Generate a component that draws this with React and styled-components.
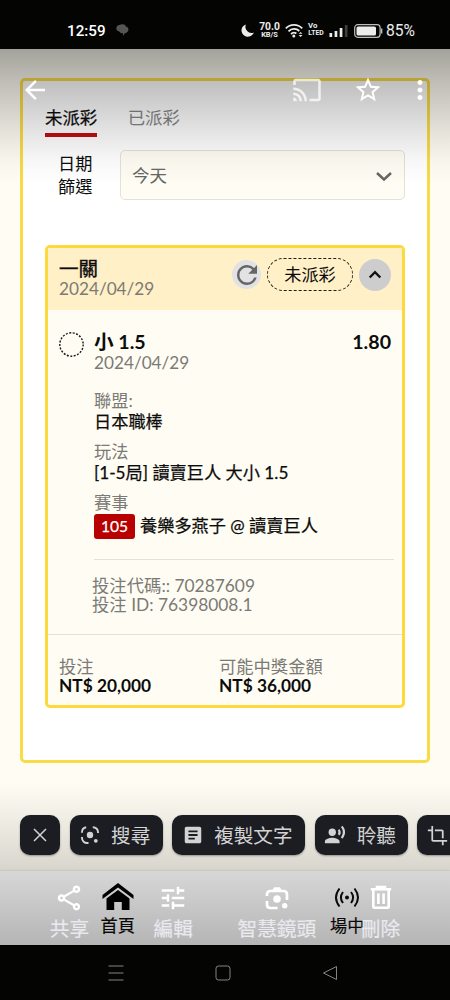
import React from 'react'
import styled, { createGlobalStyle } from 'styled-components'
import {
  MdArrowBack,
  MdCast,
  MdStarBorder,
  MdMoreVert,
  MdOutlineShare,
  MdTune,
  MdArticle,
  MdRecordVoiceOver,
  MdCrop,
  MdRefresh
} from 'react-icons/md'

const GlobalStyle = createGlobalStyle`
  * {
    box-sizing: border-box;
  }
  body {
    margin: 0;
    background: #040503;
  }
  svg {
    display: block;
    flex-shrink: 0;
  }
`

const Screen = styled.div`
  width: 450px;
  height: 1000px;
  overflow: hidden;
  display: flex;
  flex-direction: column;
  background: #040503;
  font-family: Lato, 'Noto Sans CJK TC', sans-serif;
  font-size: 17.2px;
  line-height: 20px;
  color: #0c0c0c;
  white-space: nowrap;
`

/* status bar */
const StatusBar = styled.div`
  height: 49px;
  flex-shrink: 0;
  display: flex;
  align-items: center;
  padding: 12px 0 0 67px;
  color: #ececec;
  font-family: Roboto, sans-serif;
`
const Clock = styled.span`
  width: 49px;
  font-size: 15.2px;
  font-weight: 500;
  color: #fff;
`
const StatusIcons = styled.div`
  display: flex;
  align-items: center;
  width: 209px;
  margin-left: auto;
`
const Stacked = styled.div`
  display: flex;
  flex-direction: column;
  align-items: center;
  width: ${p => p.$width}px;
  margin: 0 5px;
  font-weight: 700;
  font-size: ${p => p.$size}px;
  line-height: 7.5px;
  > span:first-child {
    font-size: ${p => p.$top}px;
    line-height: ${p => p.$top - 1}px;
  }
`
const VoLabel = styled.span`
  align-self: flex-start;
`
const BatteryIcon = styled.svg`
  margin: 0 3px 0 6px;
`
const Battery = styled.span`
  font-size: 15.6px;
`

/* photographed page */
const Photo = styled.div`
  position: relative;
  height: 896px;
  flex-shrink: 0;
  display: flex;
  flex-direction: column;
  padding-top: 29px;
  background: #fffdf3;
`
const Panel = styled.div`
  height: 685px;
  margin: 0 20px;
  padding: 23px 22px 0;
  background: #fff;
  border: 3px solid #f9db45;
  border-radius: 5px;
`
const Tabs = styled.div`
  display: flex;
  gap: 30.5px;
`
const Tab = styled.div`
  height: 33px;
  padding-top: 4px;
  border-bottom: 4px solid ${p => (p.$active ? '#c00d12' : 'transparent')};
  color: ${p => (p.$active ? '#0c0c0c' : '#858585')};
  -webkit-text-stroke: ${p => (p.$active ? '0.25px' : '0')};
  font-size: 17.4px;
`
const Filter = styled.div`
  display: flex;
  align-items: center;
  margin-top: 13px;
  height: 49px;
`
const FilterLabel = styled.div`
  width: 75px;
  padding-left: 13px;
  line-height: 23px;
`
const Select = styled.div`
  flex: 1;
  height: 50px;
  display: flex;
  align-items: center;
  justify-content: space-between;
  padding: 2px 11px 0 11px;
  background: #fffdf3;
  border: 1.5px solid #e4e1d7;
  border-radius: 5px;
  color: #666;
  font-size: 17.5px;
`

/* bet slip */
const Slip = styled.div`
  height: 463px;
  margin-top: 46px;
  background: #fffdf3;
  border: 3px solid #fdd93c;
  border-radius: 5px;
`
const SlipHeader = styled.div`
  height: 62px;
  display: flex;
  align-items: center;
  padding: 0 11px 9px;
  background: #fff0c8;
`
const HeaderText = styled.div`
  flex: 1;
  padding-top: 7px;
`
const Title = styled.div`
  font-size: 19.5px;
  line-height: 21px;
  -webkit-text-stroke: 0.4px;
`
const Muted = styled.div`
  color: #7b7a76;
  height: ${p => p.$height || 20}px;
  line-height: ${p => p.$height || 20}px;
`
const Round = styled.div`
  width: ${p => p.$size}px;
  height: ${p => p.$size}px;
  border-radius: 50%;
  display: flex;
  align-items: center;
  justify-content: center;
  background: ${p => p.$bg};
  color: ${p => p.$color};
`
const Status = styled.div`
  width: 86px;
  height: 33px;
  margin: 0 6px 0 6px;
  display: flex;
  align-items: center;
  justify-content: center;
  border: 1.5px dashed #1d1b14;
  border-radius: 17px;
`
const Selection = styled.div`
  display: flex;
  padding: 21px 11px 0;
  height: 81px;
`
const DottedRing = styled.svg`
  margin: 1px 10px 0 0;
`
const SelectionText = styled.div`
  flex: 1;
`
const Strong = styled.div`
  font-size: 19.6px;
  line-height: 21px;
  height: 22px;
  font-weight: 700;
`
const Details = styled.div`
  margin: 0 8px 0 46px;
  height: 169px;
  border-bottom: 1.5px solid #e4e1d9;
`
const Pair = styled.div`
  height: 51px;
`
const Value = styled.div`
  display: flex;
  align-items: center;
  height: ${p => p.$height || 21}px;
  -webkit-text-stroke: 0.25px;
`
const Badge = styled.span`
  width: 41px;
  height: 25px;
  margin-right: 5px;
  display: flex;
  align-items: center;
  justify-content: center;
  background: #b80000;
  border-radius: 3px;
  color: #fff;
  font-size: 15.6px;
`
const Codes = styled.div`
  height: 75px;
  padding: 16px 0 0 44px;
  border-bottom: 1.5px solid #e4e1d9;
  font-size: 17.35px;
`
const Totals = styled.div`
  display: grid;
  grid-template-columns: 160px 1fr;
  padding: 22px 11px 0;
  font-size: 17.3px;
`
const Amount = styled.div`
  font-weight: 700;
  height: 19px;
  line-height: 19px;
`

/* the site's own bottom navigation */
const SiteNav = styled.div`
  height: 74px;
  margin-top: auto;
  display: flex;
  padding-left: 3px;
  background: #fff;
  box-shadow: 0 0 2px rgba(0, 0, 0, 0.2);
`
const SiteTab = styled.div`
  width: 229.5px;
  flex-shrink: 0;
  display: flex;
  flex-direction: column;
  align-items: center;
  padding-top: 11px;
  -webkit-text-stroke: 0.2px;
  > svg {
    height: 30px;
    margin-bottom: 4px;
  }
`

/* gallery controls on top of the photo */
const TopShade = styled.div`
  position: absolute;
  inset: 0 0 auto;
  height: 136px;
  display: flex;
  align-items: flex-start;
  padding: 25.5px 15px 0 20px;
  color: #fff;
  background: linear-gradient(
    rgba(0, 0, 0, 0.36),
    rgba(0, 0, 0, 0.25) 24%,
    rgba(0, 0, 0, 0.11) 60%,
    rgba(0, 0, 0, 0.03) 82%,
    transparent
  );
`
const TopActions = styled.div`
  display: flex;
  margin-left: auto;
  > svg:first-child {
    margin-right: 31px;
    opacity: 0.75;
  }
  > svg:last-child {
    margin-left: 22.5px;
  }
`
const BottomShade = styled.div`
  position: absolute;
  inset: auto 0 0;
  height: 162px;
  padding-top: 32px;
  overflow: hidden;
  background: linear-gradient(transparent, rgba(0, 0, 0, 0.29));
`
const Chips = styled.div`
  display: flex;
  gap: 9.6px;
  padding-left: 20px;
`
const Chip = styled.div`
  height: 40px;
  width: ${p => p.$width}px;
  flex-shrink: 0;
  display: flex;
  align-items: center;
  gap: ${p => p.$gap || 11}px;
  padding-left: ${p => p.$pad || 11}px;
  background: #1b1d22;
  border-radius: 10px;
  box-shadow: 0 1px 2px rgba(0, 0, 0, 0.35);
  color: #d3d3d3;
  font-size: 19.6px;
  > span {
    padding-top: 2px;
  }
`
const Actions = styled.div`
  display: grid;
  grid-template-columns: repeat(4, 1fr);
  margin-top: 27.5px;
  padding: 0 17.6px;
`
const Action = styled.div`
  display: flex;
  flex-direction: column;
  align-items: center;
  color: #fff;
  font-size: 19.7px;
  > span {
    margin-top: 6px;
    color: #e9e9ee;
    -webkit-text-stroke: 0.2px;
  }
`

const SystemNav = styled.div`
  flex: 1;
  display: flex;
  align-items: center;
  justify-content: space-between;
  padding: 0 112px 0 108px;
  color: #85867f;
`

const Line = ({ size = 24, box = '0 0 24 24', width = 2, children }) => (
  <svg
    width={size}
    height={size}
    viewBox={box}
    fill="none"
    stroke="currentColor"
    strokeWidth={width}
  >
    {children}
  </svg>
)

const StatusRow = () => (
  <StatusBar>
    <Clock>12:59</Clock>
    <svg width="13" height="13" viewBox="0 0 13 13" fill="#555">
      <path d="M5 0.5C8 0 9.5 1 9.8 2.6C12 3 12.8 4.6 12.3 6.5C11.9 8 10.5 9 8.8 9.2L7 12V9.2C5 9.2 3.8 8.5 3.3 7.4C1.2 7.2 0.2 5.5 0.3 4C0.5 2 2.3 0.8 5 0.5Z" />
    </svg>
    <StatusIcons>
      <svg width="13" height="13" viewBox="0 0 13 13" fill="currentColor">
        <path d="M5 0.4A6.3 6.3 0 1 0 12.8 8.4A6 6 0 0 1 5 0.4Z" />
      </svg>
      <Stacked $width={21} $size={7.4} $top={10.3}>
        <span>70.0</span>
        <span>KB/S</span>
      </Stacked>
      <svg
        width="18"
        height="15"
        viewBox="0 0 18 15"
        fill="none"
        stroke="currentColor"
        strokeWidth="1.8"
      >
        <path d="M0.8 5.3C5.3 0.6 12.7 0.6 17.2 5.3M3.5 8.3C6.6 5.2 11.4 5.2 14.3 8" />
        <path d="M6 11C7.7 9.4 9.8 9.4 11.4 10.5" />
        <circle cx="8.8" cy="13" r="1.5" fill="currentColor" stroke="none" />
        <path
          d="M13.7 10.8L15.6 8.9L17.5 10.8ZM13.7 12L15.6 13.9L17.5 12Z"
          fill="currentColor"
          stroke="none"
        />
      </svg>
      <Stacked $width={16} $size={6.8} $top={7.8}>
        <VoLabel>Vo</VoLabel>
        <span>LTED</span>
      </Stacked>
      <svg width="19" height="13" viewBox="0 0 19 13" fill="currentColor">
        <path d="M0.5 9H3.2V13H0.5ZM5.6 7H8.3V13H5.6ZM10.7 4H13.4V13H10.7Z" />
        <path d="M15.8 1H18.5V13H15.8Z" opacity="0.25" />
      </svg>
      <BatteryIcon
        width="29"
        height="14"
        viewBox="0 0 29 14"
        fill="none"
        stroke="#bdbdbd"
      >
        <rect x="0.7" y="0.7" width="25.4" height="12.6" rx="3" strokeWidth="1.2" />
        <rect x="2.5" y="2.4" width="19.5" height="9.2" rx="1.6" fill="#ececec" stroke="none" />
        <path d="M27.6 4.5V9.5" strokeWidth="1.5" />
      </BatteryIcon>
      <Battery>85%</Battery>
    </StatusIcons>
  </StatusBar>
)

const BetSlip = () => (
  <Slip>
    <SlipHeader>
      <HeaderText>
        <Title>一關</Title>
        <Muted>2024/04/29</Muted>
      </HeaderText>
      <Round $size={29} $bg="#e2e2e4" $color="#666">
        <MdRefresh size={30} />
      </Round>
      <Status>未派彩</Status>
      <Round $size={32} $bg="#cdcdcd" $color="#111">
        <Line size={14} box="0 0 14 14" width={2.4}>
          <path d="M1.7 9.5L7 4.2L12.3 9.5" />
        </Line>
      </Round>
    </SlipHeader>

    <Selection>
      <DottedRing width="25" height="25" viewBox="0 0 25 25">
        <circle
          cx="12.5"
          cy="12.5"
          r="11.7"
          fill="none"
          stroke="#1a1a1a"
          strokeWidth="1.4"
          strokeDasharray="2 1.5"
        />
      </DottedRing>
      <SelectionText>
        <Strong>小 1.5</Strong>
        <Muted>2024/04/29</Muted>
      </SelectionText>
      <Strong>1.80</Strong>
    </Selection>

    <Details>
      <Pair>
        <Muted>聯盟:</Muted>
        <Value>日本職棒</Value>
      </Pair>
      <Pair>
        <Muted>玩法</Muted>
        <Value>[1-5局] 讀賣巨人 大小 1.5</Value>
      </Pair>
      <Pair>
        <Muted>賽事</Muted>
        <Value $height={26}>
          <Badge>105</Badge>養樂多燕子 @ 讀賣巨人
        </Value>
      </Pair>
    </Details>

    <Codes>
      <Muted $height={19}>投注代碼:: 70287609</Muted>
      <Muted $height={19}>投注 ID: 76398008.1</Muted>
    </Codes>

    <Totals>
      <div>
        <Muted $height={19}>投注</Muted>
        <Amount>NT$ 20,000</Amount>
      </div>
      <div>
        <Muted $height={19}>可能中獎金額</Muted>
        <Amount>NT$ 36,000</Amount>
      </div>
    </Totals>
  </Slip>
)

const GalleryControls = () => (
  <>
    <TopShade>
      <MdArrowBack size={30} />
      <TopActions>
        <MdCast size={30} />
        <MdStarBorder size={30} />
        <MdMoreVert size={30} />
      </TopActions>
    </TopShade>

    <BottomShade>
      <Chips>
        <Chip $width={40} $pad={13}>
          <Line size={14} box="0 0 14 14" width={1.5}>
            <path d="M1 1L13 13M13 1L1 13" />
          </Line>
        </Chip>
        <Chip $width={93} $pad={11} $gap={12.5}>
          <Line size={18} box="0 0 18 18" width={1.9}>
            <path d="M1 6.8V6A5 5 0 0 1 5.2 1.3M11.8 1.2A5 5 0 0 1 17 6V7M1 11V12A5 5 0 0 0 6.5 17H7.5" />
            <circle cx="9" cy="9" r="3.2" fill="currentColor" stroke="none" />
            <circle cx="14.8" cy="14.8" r="1.9" fill="currentColor" stroke="none" />
          </Line>
          <span>搜尋</span>
        </Chip>
        <Chip $width={133} $pad={10} $gap={10}>
          <MdArticle size={22} />
          <span>複製文字</span>
        </Chip>
        <Chip $width={93} $pad={9}>
          <MdRecordVoiceOver size={22} />
          <span>聆聽</span>
        </Chip>
        <Chip $width={93} $pad={10}>
          <MdCrop size={21} />
        </Chip>
      </Chips>
      <Actions>
        <Action>
          <MdOutlineShare size={30} />
          <span>共享</span>
        </Action>
        <Action>
          <MdTune size={30} />
          <span>編輯</span>
        </Action>
        <Action>
          <Line size={30} box="0 0 30 30" width={2.7}>
            <path d="M5 13V11.5Q5 8 8.5 8H21.5Q25 8 25 11.5V17M5 18V21.5Q5 25 8.5 25H15.5" />
            <path d="M10.5 7L12 4.2H18L19.5 7Z" fill="currentColor" stroke="none" />
            <circle cx="15" cy="16" r="3.8" fill="currentColor" stroke="none" />
            <circle cx="22.7" cy="22.7" r="2.7" fill="currentColor" stroke="none" />
          </Line>
          <span>智慧鏡頭</span>
        </Action>
        <Action>
          <Line size={30} box="0 0 30 30" width={2.6}>
            <path d="M4.8 6.3H25.2M7.3 7V23.2Q7.3 24.7 8.8 24.7H21.2Q22.7 24.7 22.7 23.2V7M12.4 10.5V21M17.6 10.5V21" />
            <path d="M11 5.5V4H19V5.5" />
          </Line>
          <span>刪除</span>
        </Action>
      </Actions>
    </BottomShade>
  </>
)

const App = () => (
  <Screen>
    <GlobalStyle />
    <StatusRow />
    <Photo>
      <Panel>
        <Tabs>
          <Tab $active>未派彩</Tab>
          <Tab>已派彩</Tab>
        </Tabs>
        <Filter>
          <FilterLabel>
            日期
            <br />
            篩選
          </FilterLabel>
          <Select>
            今天
            <Line size={18} box="0 0 18 18" width={2.5}>
              <path d="M2 6L9 12.5L16 6" />
            </Line>
          </Select>
        </Filter>
        <BetSlip />
      </Panel>
      <SiteNav>
        <SiteTab>
          <svg width="32" height="30" viewBox="0 0 32 30">
            <path d="M16 1L31.5 13V17L16 5.5L0.5 17V13Z" />
            <path d="M16 8L27.5 16.5V28H19.8V20H12.2V28H4.5V16.5Z" />
          </svg>
          首頁
        </SiteTab>
        <SiteTab>
          <Line size={30} box="0 0 30 30" width={2}>
            <path d="M7.5 6.5Q0.5 15.5 7.5 24.5M22.5 6.5Q29.5 15.5 22.5 24.5M11 10Q6.8 15.5 11 21M19 10Q23.2 15.5 19 21" />
            <circle cx="15" cy="15.5" r="2" fill="currentColor" stroke="none" />
          </Line>
          場中
        </SiteTab>
      </SiteNav>
      <GalleryControls />
    </Photo>
    <SystemNav>
      <Line size={16} box="0 0 16 16" width={1}>
        <path d="M0.5 1H15.5M0.5 8H15.5M0.5 15H15.5" />
      </Line>
      <Line size={16} box="0 0 16 16" width={1}>
        <rect x="1" y="1" width="14" height="14" rx="2.5" />
      </Line>
      <Line size={16} box="0 0 16 16" width={1}>
        <path d="M14.5 1.5V14.5L1.5 8Z" strokeLinejoin="round" />
      </Line>
    </SystemNav>
  </Screen>
)

export default App
